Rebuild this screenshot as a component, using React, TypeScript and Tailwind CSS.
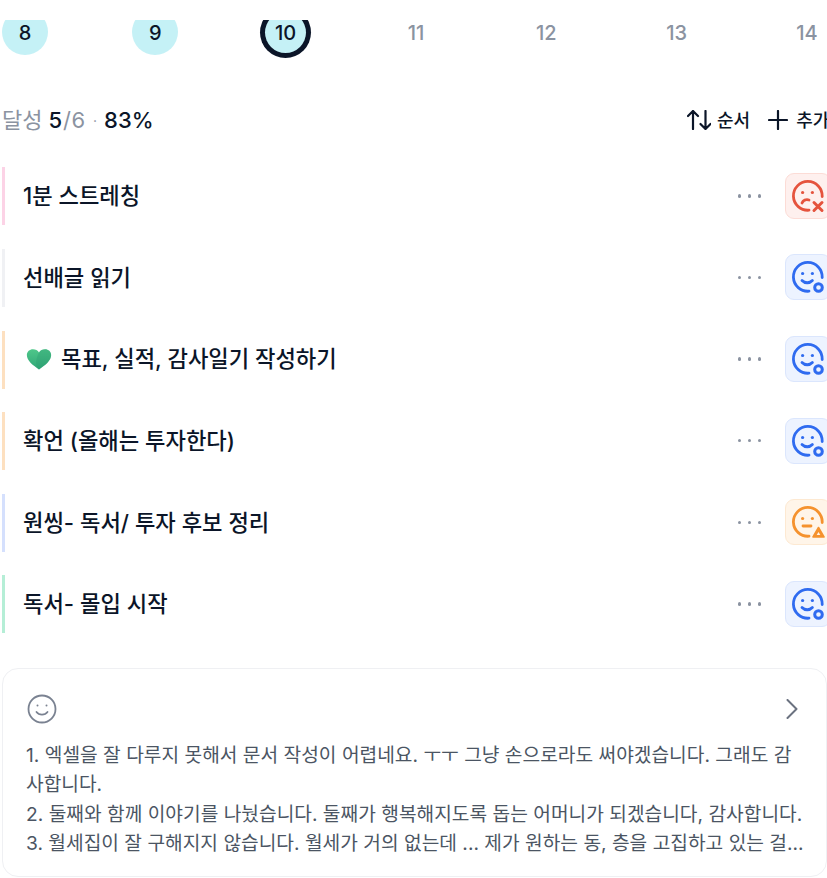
const days = [8, 9, 10, 11, 12, 13, 14];

type Status = 'fail' | 'done' | 'warn';

const tasks: { title: string; bar: string; status: Status; heart?: boolean }[] = [
  { title: '1분 스트레칭', bar: 'bg-[#fcd3e6]', status: 'fail' },
  { title: '선배글 읽기', bar: 'bg-[#f0f1f4]', status: 'done' },
  { title: '목표, 실적, 감사일기 작성하기', bar: 'bg-[#fde0c0]', status: 'done', heart: true },
  { title: '확언 (올해는 투자한다)', bar: 'bg-[#fde0c0]', status: 'done' },
  { title: '원씽- 독서/ 투자 후보 정리', bar: 'bg-[#d5e0fd]', status: 'warn' },
  { title: '독서- 몰입 시작', bar: 'bg-[#b5eed6]', status: 'done' },
];

function Face({ status }: { status: Status }) {
  const color = status === 'fail' ? '#e5533d' : status === 'warn' ? '#f5922e' : '#2f6bf0';
  return (
    <svg width="34" height="34" viewBox="0 0 34 34" fill="none" stroke={color} strokeWidth="2.8" strokeLinecap="round" strokeLinejoin="round">
      <path d="M18 31.2A14.4 14.4 0 1 1 31.2 17.5" />
      <circle cx="11.6" cy="13.5" r="1.6" fill={color} stroke="none" />
      <circle cx="21.4" cy="13.5" r="1.6" fill={color} stroke="none" />
      {status === 'fail' && (
        <>
          <path d="M11 24c1-2.6 4-4 7-3" />
          <path d="M23 23.5l8 8M31 23.5l-8 8" strokeWidth="3" />
        </>
      )}
      {status === 'done' && (
        <>
          <path d="M11 20.5c2.8 3 7.6 3 10.4 0" />
          <circle cx="27.5" cy="27.5" r="3.8" strokeWidth="3" />
        </>
      )}
      {status === 'warn' && (
        <>
          <path d="M12 21h8" />
          <path d="M27.5 22.5l5.5 9.5h-11z" fill={color} strokeWidth="1.6" />
          <path d="M27.5 27l1.8 3h-3.6z" fill="#fff5e9" stroke="none" />
        </>
      )}
    </svg>
  );
}

function Heart() {
  return (
    <svg width="26" height="24" viewBox="0 0 24 24" preserveAspectRatio="none">
      <defs>
        <linearGradient id="heart" x1="0" y1="0" x2="0" y2="1">
          <stop offset="0" stopColor="#4fc78a" />
          <stop offset="1" stopColor="#2fa676" />
        </linearGradient>
      </defs>
      <path d="M12 22.5C6 18 .8 13.6.8 8 .8 4.6 3.4 2.2 6.4 2.2c2.4 0 4.4 1.2 5.6 3.2 1.2-2 3.2-3.2 5.6-3.2 3 0 5.6 2.4 5.6 5.8 0 5.6-5.2 10-11.2 14.5z" fill="url(#heart)" />
      <path d="M12 22.5C9 20 8 14 12 5.4c1.2-2 3.2-3.2 5.6-3.2 3 0 5.6 2.4 5.6 5.8 0 5.6-5.2 10-11.2 14.5z" fill="#2b9c6f" opacity="0.35" />
    </svg>
  );
}

function Row({ task }: { task: (typeof tasks)[number] }) {
  const box =
    task.status === 'fail'
      ? 'bg-[#fef0ee] border-[#fcdcd6]'
      : task.status === 'warn'
        ? 'bg-[#fff5e9] border-[#fde9d2]'
        : 'bg-[#edf3ff] border-[#dbe6fd]';
  return (
    <div className="flex items-center h-[58px]">
      <div className={`w-[3.5px] h-full ${task.bar}`} />
      <div className="flex-1 flex items-center pl-[18px] text-[22.2px] font-medium text-[#0b1528] -mt-[1px]">
        {task.heart && (
          <span className="ml-[3px] mr-[9px] flex">
            <Heart />
          </span>
        )}
        {task.title}
      </div>
      <div className="flex gap-[6.5px] mr-[24px] -mt-[1px]">
        <span className="w-[3.5px] h-[3.5px] rounded-full bg-[#8b93a1]" />
        <span className="w-[3.5px] h-[3.5px] rounded-full bg-[#8b93a1]" />
        <span className="w-[3.5px] h-[3.5px] rounded-full bg-[#8b93a1]" />
      </div>
      <div className={`w-[46px] h-[46px] shrink-0 rounded-[9px] border flex items-center justify-center -mr-[4px] -mt-[1px] ${box}`}>
        <Face status={task.status} />
      </div>
    </div>
  );
}

export default function App() {
  return (
    <div className="w-[827px] h-[878px] overflow-hidden bg-white font-['Inter','Noto_Sans_CJK_KR',sans-serif]">
      <div className="h-[38px] mt-[20px] overflow-hidden">
        <div className="flex justify-between w-[830px] pl-[2px] -mt-[11px]">
          {days.map((d) => {
            const past = d < 10;
            const today = d === 10;
            return (
              <div key={d} className="w-[46px] h-[46px] flex items-center justify-center shrink-0">
                <div
                  className={`flex items-center justify-center rounded-full text-[20px] font-medium pt-[1px] ${
                    past ? 'w-[46px] h-[46px] bg-[#c5f1f6] text-[#0b1528]' : ''
                  } ${today ? 'w-[41px] h-[41px] shrink-0 bg-[#c5f1f6] text-[#0b1528] ring-[5px] ring-[#0b1528]' : ''} ${
                    !past && !today ? 'text-[#8b93a1]' : ''
                  }`}
                >
                  {d}
                </div>
              </div>
            );
          })}
        </div>
      </div>

      <div className="flex items-center justify-between h-[34px] mt-[45px] pl-[2px]">
        <div className="flex items-center text-[22px] text-[#8b93a1] whitespace-nowrap">
          달성
          <span className="ml-[6px] tracking-[0.8px]">
            <span className="text-[#0b1528] font-medium">5</span>/6
          </span>
          <span className="text-[14px] mx-[7px]">·</span>
          <span className="text-[#0b1528] font-medium">83%</span>
        </div>
        <div className="flex items-center text-[18px] font-medium text-[#0b1528] whitespace-nowrap -mr-[5px] w-[145px] shrink-0">
          <svg width="24" height="20" viewBox="0 0 24 20" fill="none" stroke="#0b1528" strokeWidth="2.2" strokeLinecap="round" strokeLinejoin="round">
            <path d="M6 19V1M1 6l5-5 5 5M18.5 1v18M13.5 14l5 5 5-5" />
          </svg>
          <span className="ml-[6px]">순서</span>
          <svg className="ml-[18px]" width="20" height="20" viewBox="0 0 20 20" fill="none" stroke="#0b1528" strokeWidth="2.2" strokeLinecap="round">
            <path d="M10 1v18M1 10h18" />
          </svg>
          <span className="ml-[8px]">추가</span>
        </div>
      </div>

      <div className="flex flex-col gap-[23.6px] mt-[30.4px] pl-[1.5px]">
        {tasks.map((t) => (
          <Row key={t.title} task={t} />
        ))}
      </div>

      <div className="ml-[2px] mr-[0.5px] mt-[34.6px] h-[209px] rounded-[16px] border border-[#eff0f3] pl-[23px] pr-[24px] pt-[22px]">
        <div className="flex items-center justify-between h-[36px]">
          <svg width="32" height="32" viewBox="0 0 32 32" fill="none" stroke="#7a8291" strokeWidth="1.8" strokeLinecap="round">
            <circle cx="16" cy="16" r="13.5" />
            <path d="M10.5 19c2.6 3.4 8.4 3.4 11 0" />
            <circle cx="11.5" cy="12.5" r="1" fill="#7a8291" stroke="none" />
            <circle cx="20.5" cy="12.5" r="1" fill="#7a8291" stroke="none" />
          </svg>
          <svg className="mr-[4px]" width="12" height="20" viewBox="0 0 12 20" fill="none" stroke="#6b7280" strokeWidth="2" strokeLinecap="round" strokeLinejoin="round">
            <path d="M1.5 1l9 9-9 9" />
          </svg>
        </div>
        <p className="mt-[14px] text-[19.2px] leading-[29.4px] text-[#4b5563] whitespace-nowrap">
          1. 엑셀을 잘 다루지 못해서 문서 작성이 어렵네요. ㅜㅜ 그냥 손으로라도 써야겠습니다. 그래도 감
          <br />
          사합니다.
          <br />
          2. 둘째와 함께 이야기를 나눴습니다. 둘째가 행복해지도록 돕는 어머니가 되겠습니다, 감사합니다.
          <br />
          3. 월세집이 잘 구해지지 않습니다. 월세가 거의 없는데 ... 제가 원하는 동, 층을 고집하고 있는 걸...
        </p>
      </div>
    </div>
  );
}
